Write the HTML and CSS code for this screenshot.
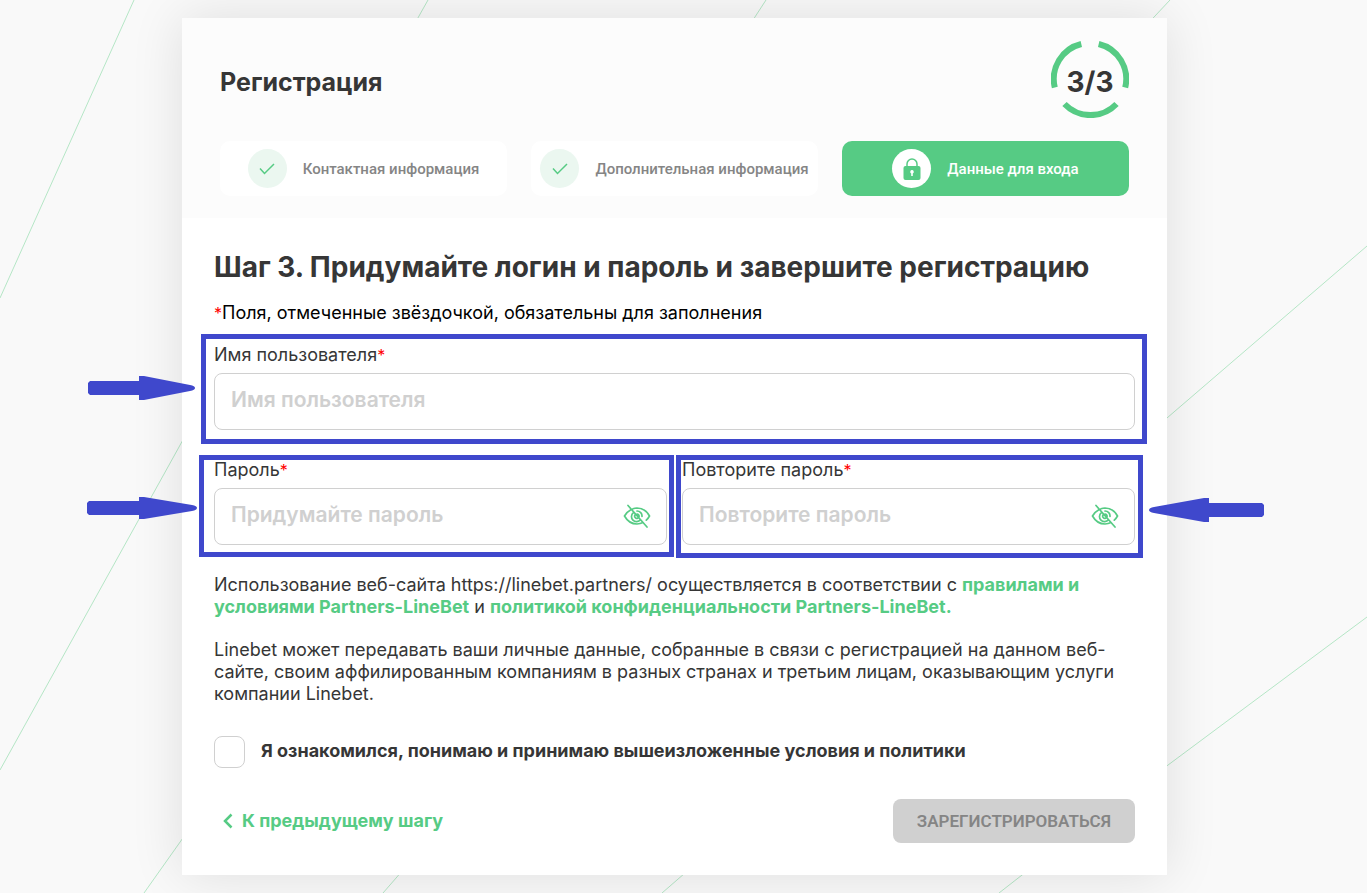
FILE: index.html
```html
<!DOCTYPE html>
<html lang="ru">
<head>
    <meta charset="UTF-8">
    <meta name="viewport" content="width=device-width, initial-scale=1">
    <title>Регистрация</title>
    <link rel="stylesheet" href="styles.css">
</head>
<body>

<svg class="bg-lines" viewBox="0 0 1367 893" preserveAspectRatio="none" aria-hidden="true">
    <path d="M134 0L0 298M184 438L0 770M428 0L410 32M766 0L740 40M1170 0L1140 32"/>
    <path d="M190 828L144 893M410 862L383 893M700 860L662 893M1040 861L999 893"/>
    <path d="M1367 246L1160 424M1367 617L1160 771"/>
</svg>

<main class="card">
    <header class="head">
        <div class="head-top">
            <h1>Регистрация</h1>
            <div class="progress">
                <svg viewBox="0 0 78 78" aria-hidden="true">
                    <path d="M47.7 4A36 36 0 0 1 74.2 47.5M65.5 64A36 36 0 0 1 13.5 64M3.8 47.5A36 36 0 0 1 30.3 4"/>
                </svg>
                <span>3/3</span>
            </div>
        </div>
        <ol class="steps">
            <li class="step">
                <span class="step-icon">
                    <svg class="check" viewBox="0 0 16 12"><path d="M1 5.5L5.5 10.5L15 1"/></svg>
                </span>
                Контактная информация
            </li>
            <li class="step">
                <span class="step-icon">
                    <svg class="check" viewBox="0 0 16 12"><path d="M1 5.5L5.5 10.5L15 1"/></svg>
                </span>
                Дополнительная информация
            </li>
            <li class="step active">
                <span class="step-icon">
                    <svg class="lock" viewBox="0 0 18 22">
                        <path class="shackle" d="M4 9V6a5 5 0 0 1 10 0v3"/>
                        <rect x="0.5" y="8" width="17" height="14" rx="2"/>
                        <path class="hole" d="M9 12a1.8 1.8 0 0 1 .8 3.4V18H8.2v-2.6A1.8 1.8 0 0 1 9 12z"/>
                    </svg>
                </span>
                Данные для входа
            </li>
        </ol>
    </header>

    <form class="form">
        <h2>Шаг 3. Придумайте логин и пароль и завершите регистрацию</h2>
        <p class="note"><i>*</i>Поля, отмеченные звёздочкой, обязательны для заполнения</p>

        <div class="field field-name">
            <label for="login">Имя пользователя<i>*</i></label>
            <input type="text" id="login" placeholder="Имя пользователя">
            <svg class="arrow" viewBox="0 0 107 24" aria-hidden="true"><path d="M2 5H51V0H56L102 9Q107 10 107 12T102 15L56 24H51V19H2L0 17V7z"/></svg>
        </div>

        <div class="row">
            <div class="field field-pass">
                <label for="pass">Пароль<i>*</i></label>
                <div class="control">
                    <input type="password" id="pass" placeholder="Придумайте пароль">
                    <button type="button" class="eye" aria-label="Показать пароль">
                        <svg viewBox="0 0 28 24"><path d="M10 4.8A13 13 0 0 1 14 4C20 4 24 7.5 26.5 12C25.6 13.6 24.6 15 23.3 16.2M7.5 6C4.8 7.4 2.9 9.5 1.5 12C4 16.5 8 20 14 20C16.2 20 18.2 19.5 20 18.6M10.5 8.6A5 5 0 1 0 17.5 15.6M14 7A5 5 0 0 1 19 12.5M14 10A2.2 2.2 0 0 1 16 12.8M12 11A2.2 2.2 0 0 0 14.6 14.2M5 1.5L24 23"/></svg>
                    </button>
                </div>
                <svg class="arrow" viewBox="0 0 110 22" aria-hidden="true"><path d="M2 4H52V0H57L105 8Q110 9 110 11T105 14L57 22H52V18H2L0 16V6z"/></svg>
            </div>
            <div class="field field-repeat">
                <label for="repeat">Повторите пароль<i>*</i></label>
                <div class="control">
                    <input type="password" id="repeat" placeholder="Повторите пароль">
                    <button type="button" class="eye" aria-label="Показать пароль">
                        <svg viewBox="0 0 28 24"><path d="M10 4.8A13 13 0 0 1 14 4C20 4 24 7.5 26.5 12C25.6 13.6 24.6 15 23.3 16.2M7.5 6C4.8 7.4 2.9 9.5 1.5 12C4 16.5 8 20 14 20C16.2 20 18.2 19.5 20 18.6M10.5 8.6A5 5 0 1 0 17.5 15.6M14 7A5 5 0 0 1 19 12.5M14 10A2.2 2.2 0 0 1 16 12.8M12 11A2.2 2.2 0 0 0 14.6 14.2M5 1.5L24 23"/></svg>
                    </button>
                </div>
                <svg class="arrow" viewBox="0 0 115 24" aria-hidden="true"><path d="M113 5H60V0H55L5 9Q0 10 0 12T5 15L55 24H60V19H113L115 17V7z"/></svg>
            </div>
        </div>

        <p class="text">Использование веб-сайта https://linebet.partners/ осуществляется в соответствии с <a href="#">правилами и условиями Partners-LineBet</a> и <a href="#">политикой конфиденциальности Partners-LineBet.</a></p>
        <p class="text">Linebet может передавать ваши личные данные, собранные в связи с регистрацией на данном веб-сайте, своим аффилированным компаниям в разных странах и третьим лицам, оказывающим услуги компании Linebet.</p>

        <div class="agree">
            <input type="checkbox" id="agree">
            <label for="agree">Я ознакомился, понимаю и принимаю вышеизложенные условия и политики</label>
        </div>

        <div class="actions">
            <a class="back" href="#">
                <svg viewBox="0 0 10 16"><path d="M8.5 1.5L2 8L8.5 14.5"/></svg>
                К предыдущему шагу
            </a>
            <button type="submit" class="submit" disabled>ЗАРЕГИСТРИРОВАТЬСЯ</button>
        </div>
    </form>
</main>

</body>
</html>
```
FILE: styles.css
```css
*{
    box-sizing: border-box;
}
body{
    position: relative;
    margin: 0;
    padding: 18px 18px 18px 0;
    min-height: 100vh;
    background: #f9f9f9;
    color: #363636;
    font-family: Inter, "Liberation Sans", sans-serif;
    font-size: 18px;
    line-height: 22px;
}
h1, h2, p, ol{
    margin: 0;
    padding: 0;
}
i{
    color: #f00;
    font-size: 16px;
    font-style: normal;
    line-height: 16px;
}
.bg-lines{
    position: absolute;
    left: 0;
    top: 0;
    width: 100%;
    height: 100%;
    fill: none;
    stroke: #b5e6c6;
    stroke-width: 1;
}
.card{
    position: relative;
    max-width: 985px;
    margin: 0 auto;
    background: #fff;
    box-shadow: 0 0 50px rgba(0,0,0,0.11);
}

/* header */
.head{
    padding: 22px 38px;
    background: #fcfcfc;
}
.head-top{
    display: flex;
    justify-content: space-between;
    align-items: center;
    margin-bottom: 23px;
}
h1{
    padding-top: 6px;
    font-size: 25px;
    line-height: 32px;
}
.progress{
    display: grid;
    place-items: center;
    width: 78px;
    height: 78px;
    font-size: 28px;
    font-weight: 700;
}
.progress svg, .progress span{
    grid-area: 1 / 1;
}
.progress span{
    padding-top: 6px;
}
.progress svg{
    width: 78px;
    fill: none;
    stroke: #56cb84;
    stroke-width: 6;
}
.steps{
    display: grid;
    grid-template-columns: repeat(3, 1fr);
    gap: 24px;
    list-style: none;
}
.step{
    display: flex;
    justify-content: center;
    align-items: center;
    gap: 16px;
    height: 55px;
    background: #fff;
    border-radius: 10px;
    color: #858585;
    font-family: Roboto, sans-serif;
    font-size: 15px;
    font-weight: 500;
    white-space: nowrap;
}
.step-icon{
    display: flex;
    justify-content: center;
    align-items: center;
    width: 39px;
    height: 39px;
    border-radius: 50%;
    background: #ebf7f0;
}
.check{
    width: 16px;
    fill: none;
    stroke: #56cb84;
    stroke-width: 1.5;
}
.active{
    background: #56cb84;
    color: #fff;
}
.active .step-icon{
    background: #fff;
}
.lock{
    width: 18px;
    fill: #56cb84;
}
.lock .shackle{
    fill: none;
    stroke: #56cb84;
    stroke-width: 1.5;
}
.lock .hole{
    fill: #fff;
}

/* form */
.form{
    padding: 32px;
}
h2{
    margin-bottom: 18px;
    font-size: 28px;
    line-height: 34px;
}
.note{
    margin-bottom: 20px;
    color: #000;
}
.row{
    display: grid;
    grid-template-columns: 1fr 1fr;
    gap: 15px;
    margin: 29px 0;
}
.field{
    position: relative;
}
.field label{
    display: block;
    margin-bottom: 7px;
}
.field input{
    display: block;
    width: 100%;
    height: 57px;
    padding: 0 16px 4px;
    background: #fff;
    border: 1px solid #d0d0d0;
    border-radius: 8px;
    font-family: inherit;
    font-size: 21px;
    font-weight: 600;
}
.field input::placeholder{
    color: #d0d0d0;
}
.control{
    position: relative;
}
.eye{
    position: absolute;
    right: 16px;
    top: 16px;
    padding: 0;
    border: 0;
    background: none;
    cursor: pointer;
}
.eye svg{
    display: block;
    width: 28px;
    height: 24px;
    fill: none;
    stroke: #56cb84;
    stroke-width: 1.7;
    stroke-linecap: round;
}

/* blue marks around the fields */
.field::before{
    content: "";
    position: absolute;
    border: 5px solid #3f48cc;
    pointer-events: none;
}
.field-name::before{
    inset: -10px -12px -14px -13px;
}
.field-pass::before{
    inset: -4px -7px -12px -15px;
}
.field-repeat::before{
    inset: -4px -8px -13px -6px;
}
.arrow{
    position: absolute;
    fill: #3f48cc;
}
.field-name .arrow{
    right: calc(100% + 19px);
    top: 32px;
    width: 107px;
}
.field-pass .arrow{
    right: calc(100% + 17px);
    top: 38px;
    width: 110px;
}
.field-repeat .arrow{
    left: calc(100% + 14px);
    top: 39px;
    width: 115px;
}

.text{
    margin-bottom: 21px;
}
.text a, .back{
    color: #56cb84;
    font-weight: 700;
    text-decoration: none;
}
.agree{
    display: flex;
    gap: 16px;
    margin: 31px 0;
    font-weight: 700;
}
.agree input{
    appearance: none;
    flex: none;
    width: 31px;
    height: 32px;
    margin: 0;
    border: 1px solid #d0d0d0;
    border-radius: 8px;
}
.agree label{
    padding-top: 4px;
}
.actions{
    display: flex;
    justify-content: space-between;
    align-items: center;
}
.back{
    display: flex;
    align-items: center;
    gap: 9px;
    padding-left: 9px;
}
.back svg{
    width: 10px;
    fill: none;
    stroke: #56cb84;
    stroke-width: 2.5;
}
.submit{
    height: 44px;
    padding: 0 24px;
    border: 0;
    border-radius: 8px;
    background: #d0d0d0;
    color: #858585;
    font-family: Roboto, sans-serif;
    font-size: 17px;
    font-weight: 600;
}
```
